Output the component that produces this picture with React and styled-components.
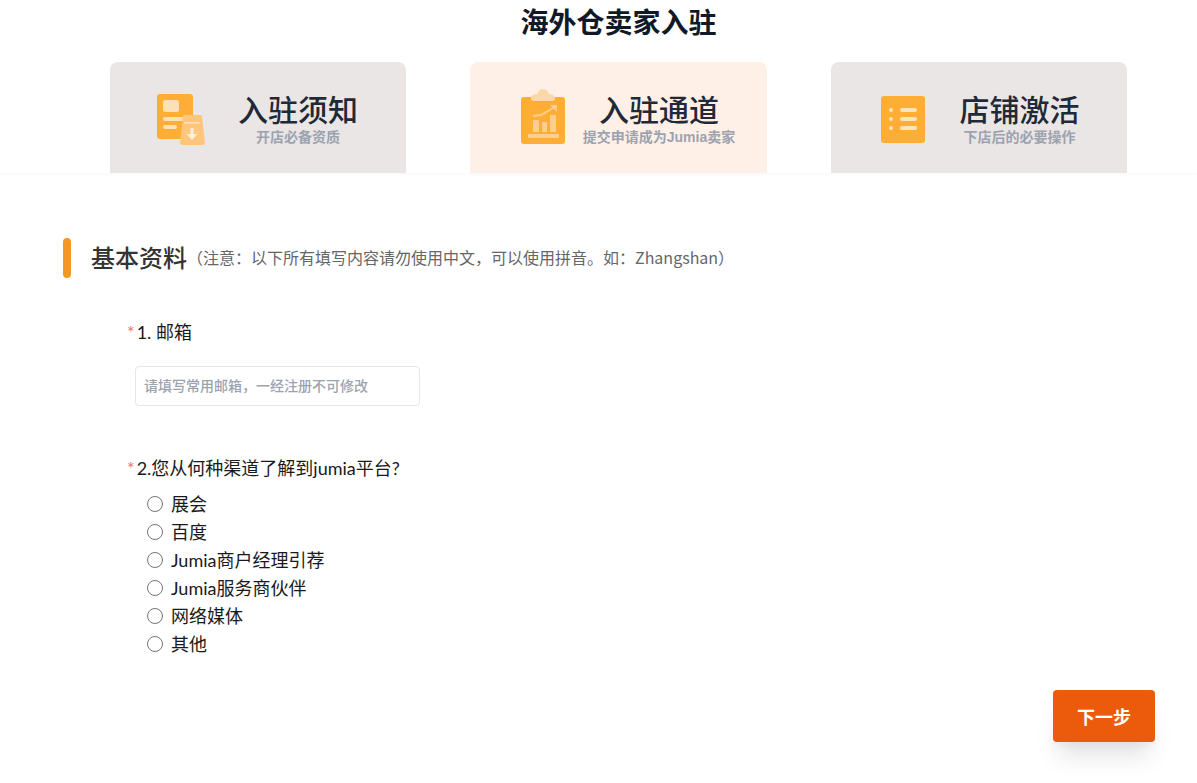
import React from "react";
import styled, { createGlobalStyle } from "styled-components";

const GlobalStyle = createGlobalStyle`
  html, body {
    margin: 0;
    padding: 0;
    background: #fff;
    font-family: Lato, "Noto Sans CJK SC", sans-serif;
  }
  * {
    box-sizing: border-box;
  }
`;

const Page = styled.div`
  width: 1197px;
  height: 783px;
  overflow: hidden;
`;

const Header = styled.header`
  height: 173px;
  padding: 0 70px 0 110px;
  box-shadow: 0 1px 4px rgba(0, 0, 0, 0.04);
`;

const Title = styled.h1`
  margin: 0;
  height: 62px;
  text-align: center;
  font-family: "Noto Sans CJK SC", sans-serif;
  font-size: 28px;
  line-height: 42px;
  font-weight: 700;
  color: #111827;
`;

const Steps = styled.div`
  display: grid;
  grid-template-columns: 296px 297px 296px;
  justify-content: space-between;
`;

const Step = styled.div`
  height: 111px;
  display: flex;
  align-items: center;
  padding-top: 3px;
  border-radius: 8px 8px 0 0;
  background: ${(p) => (p.$active ? "#fff0e7" : "#eae6e6")};
`;

const StepIcon = styled.div`
  width: ${(p) => p.$w}px;
  margin-left: ${(p) => p.$left}px;
  margin-bottom: ${(p) => p.$lift || 0}px;
  flex: none;
  display: flex;
`;

const StepText = styled.div`
  flex: 1;
  display: flex;
  flex-direction: column;
  align-items: center;
  margin-right: ${(p) => p.$right}px;
`;

const StepTitle = styled.div`
  font-family: "Noto Sans CJK SC", sans-serif;
  font-size: 30px;
  line-height: 32px;
  font-weight: 500;
  color: #1f2937;
  white-space: nowrap;
`;

const StepSub = styled.div`
  font-family: "Liberation Sans", "Noto Sans CJK SC", sans-serif;
  font-size: 14px;
  line-height: 18px;
  font-weight: 700;
  color: #9ca3af;
  white-space: nowrap;
  margin-top: 4px;
`;

const Main = styled.main`
  padding: 65px 42px 0 63px;
`;

const SectionHead = styled.div`
  display: flex;
  align-items: center;
  height: 40px;
`;

const Bar = styled.span`
  width: 8px;
  height: 40px;
  border-radius: 4px;
  background: #f7971e;
  margin-right: 20px;
`;

const SectionTitle = styled.h2`
  margin: 0 0 2px;
  font-family: "Noto Sans CJK SC", sans-serif;
  font-size: 24px;
  line-height: 36px;
  font-weight: 500;
  color: #333;
`;

const SectionNote = styled.span`
  font-family: "Noto Sans CJK SC", sans-serif;
  font-size: 16px;
  line-height: 24px;
  color: #666;
  margin: 0 0 2px 0;
`;

const Field = styled.div`
  padding-left: 64px;
  margin-top: ${(p) => p.$top}px;
`;

const Label = styled.div`
  font-size: 18px;
  line-height: 28px;
  color: #1a1a1a;
  white-space: nowrap;
`;

const Star = styled.span`
  color: #f56c6c;
  font-size: 18px;
  margin-right: 2px;
`;

const Input = styled.input`
  display: block;
  width: 285px;
  height: 40px;
  margin: 20px 0 0 8px;
  padding: 0 8px 2px;
  border: 1px solid #e5e7eb;
  border-radius: 4px;
  outline: none;
  font-family: "Noto Sans CJK SC", sans-serif;
  font-size: 14px;
  font-weight: 500;

  &::placeholder {
    color: #9ca3af;
    opacity: 1;
  }
`;

const RadioList = styled.div`
  display: flex;
  flex-direction: column;
  margin: 8px 0 0 20px;
`;

const RadioRow = styled.label`
  display: flex;
  align-items: center;
  height: 28px;
  font-size: 18px;
  color: #1a1a1a;
`;

const RadioDot = styled.span`
  width: 16px;
  height: 16px;
  margin-right: 8px;
  border: 1px solid #767676;
  border-radius: 50%;
  background: #fff;
`;

const RadioText = styled.span`
  margin-bottom: 2px;
`;

const Footer = styled.div`
  display: flex;
  justify-content: flex-end;
  margin-top: 32px;
`;

const NextButton = styled.button`
  width: 102px;
  height: 52px;
  border: 0;
  border-radius: 4px;
  background: #ec5a0c;
  color: #fff;
  font-family: "Noto Sans CJK SC", sans-serif;
  font-size: 18px;
  font-weight: 700;
  box-shadow: 0 20px 25px -5px rgba(0, 0, 0, 0.1), 0 10px 10px -5px rgba(0, 0, 0, 0.04);
`;

const NoticeIcon = () => (
  <svg width="48" height="51" viewBox="0 0 48 51">
    <rect x="0" y="0" width="36" height="45" rx="3" fill="#ffae35" />
    <rect x="6" y="6" width="16" height="12" rx="2.500" fill="#fbe0b8" />
    <rect x="6" y="23" width="21" height="4" rx="2" fill="#fbe0b8" />
    <rect x="6" y="31" width="14" height="4" rx="2" fill="#fbe0b8" />
    <path d="M27 21h17q1 0 1 1l3 27q0 2-2 2H25q-2 0-2-2l3-27q0-1 1-1z" fill="#fdc67c" />
    <rect x="27" y="28" width="16" height="1.500" fill="#fbe0b8" />
    <path d="M33.500 34h3v6h4l-5.500 6-5.500-6h4z" fill="#fdeed6" />
  </svg>
);

const ChannelIcon = () => (
  <svg width="44" height="56" viewBox="0 0 44 56">
    <rect x="0" y="9" width="44" height="47" rx="3" fill="#ffae35" />
    <path d="M10 10c0-3 3-4 6-4 1-3 3-5 6-5s5 2 6 5c3 0 6 1 6 4 0 2-1 3-3 3H13c-2 0-3-1-3-3z" fill="#fbd9a6" />
    <rect x="12" y="32" width="6" height="12" fill="#fccf8f" />
    <rect x="21" y="34" width="5" height="10" fill="#fccf8f" />
    <rect x="29" y="27" width="6" height="17" fill="#fccf8f" />
    <path d="M12 28l8-1 14-8" stroke="#fccf8f" strokeWidth="2" fill="none" />
    <path d="M29 17h7v7z" fill="#fccf8f" />
    <rect x="7" y="46" width="31" height="4" fill="#fccf8f" />
  </svg>
);

const ActivateIcon = () => (
  <svg width="44" height="47" viewBox="0 0 44 47">
    <rect x="0" y="0" width="44" height="47" rx="3" fill="#ffae35" />
    <circle cx="10" cy="14" r="2" fill="#fde3bb" />
    <circle cx="10" cy="23" r="2" fill="#fde3bb" />
    <circle cx="10" cy="32" r="2" fill="#fde3bb" />
    <rect x="19" y="12" width="17" height="4" rx="2" fill="#fde3bb" />
    <rect x="19" y="21" width="17" height="4" rx="2" fill="#fde3bb" />
    <rect x="19" y="30" width="17" height="4" rx="2" fill="#fde3bb" />
  </svg>
);

const steps = [
  { title: "入驻须知", sub: "开店必备资质", icon: <NoticeIcon />, w: 48, left: 47, right: 15 },
  { title: "入驻通道", sub: "提交申请成为Jumia卖家", icon: <ChannelIcon />, w: 44, left: 51, right: 14, lift: 7, active: true },
  { title: "店铺激活", sub: "下店后的必要操作", icon: <ActivateIcon />, w: 44, left: 50, right: 13 },
];

const channels = ["展会", "百度", "Jumia商户经理引荐", "Jumia服务商伙伴", "网络媒体", "其他"];

export default function App() {
  return (
    <Page>
      <GlobalStyle />
      <Header>
        <Title>海外仓卖家入驻</Title>
        <Steps>
          {steps.map((s) => (
            <Step key={s.title} $active={s.active}>
              <StepIcon $w={s.w} $left={s.left} $lift={s.lift}>{s.icon}</StepIcon>
              <StepText $right={s.right}>
                <StepTitle>{s.title}</StepTitle>
                <StepSub>{s.sub}</StepSub>
              </StepText>
            </Step>
          ))}
        </Steps>
      </Header>
      <Main>
        <SectionHead>
          <Bar />
          <SectionTitle>基本资料</SectionTitle>
          <SectionNote>（注意：以下所有填写内容请勿使用中文，可以使用拼音。如：Zhangshan）</SectionNote>
        </SectionHead>
        <Field $top={40}>
          <Label><Star>*</Star>1. 邮箱</Label>
          <Input placeholder="请填写常用邮箱，一经注册不可修改" />
        </Field>
        <Field $top={48}>
          <Label><Star>*</Star>2.您从何种渠道了解到jumia平台?</Label>
          <RadioList>
            {channels.map((c) => (
              <RadioRow key={c}>
                <RadioDot />
                <RadioText>{c}</RadioText>
              </RadioRow>
            ))}
          </RadioList>
        </Field>
        <Footer>
          <NextButton>下一步</NextButton>
        </Footer>
      </Main>
    </Page>
  );
}
